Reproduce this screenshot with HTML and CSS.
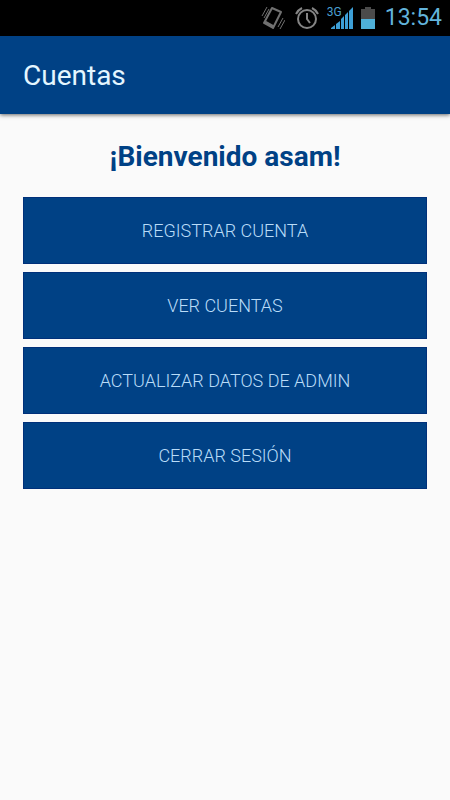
FILE: index.html
```html
<!DOCTYPE html>
<html lang="es">
  <head>
    <meta charset="UTF-8" />
    <meta name="viewport" content="width=device-width, initial-scale=1.0" />
    <title>Cuentas</title>
    <link rel="stylesheet" href="styles.css">
  </head>
  <body>
    <div class="statusBar">
      <!-- Vibrate -->
      <svg width="24" height="26" viewBox="0 0 24 26" fill="none" stroke="#707070">
        <path d="M11 3L20 7L12 23L3 18Z" stroke-width="2" stroke-linejoin="round" />
        <path d="M4 17L13 22" stroke-width="3" />
        <path d="M1 11L6 2M3 13L8 4M17 22L22 13M19 24L24 15" />
      </svg>
      <!-- Alarm -->
      <svg class="alarmIcon" width="24" height="24" viewBox="0 0 24 24" fill="none" stroke="#858585">
        <circle cx="12" cy="13" r="9" stroke-width="2" />
        <path d="M12 7V13L15 17" stroke-width="2" />
        <path d="M1 8Q3 4 7 2M23 8Q21 4 17 2" stroke-width="2" />
      </svg>
      <!-- Signal -->
      <div class="signal">
        <svg width="22" height="22" viewBox="0 0 22 22" fill="#3d9fd6">
          <path d="M0 22V21L4 18V22ZM5 22V17L9 14V22ZM10 22V12L13 9V22ZM14 22V8L17 5V22ZM18 22V4L22 0V22Z" />
        </svg>
        <span class="network">3G</span>
      </div>
      <!-- Battery -->
      <svg class="batteryIcon" width="14" height="22" viewBox="0 0 14 22">
        <path d="M4 0H10V2H14V12H0V2H4Z" fill="#4b4b4b" />
        <path d="M0 12H14V22H0Z" fill="#4fb0d8" />
      </svg>
      <span class="clock">13:54</span>
    </div>

    <header class="appBar">
      <h1>Cuentas</h1>
    </header>

    <main class="container">
      <h2>¡Bienvenido asam!</h2>
      <div class="menu">
        <button type="button">REGISTRAR CUENTA</button>
        <button type="button">VER CUENTAS</button>
        <button type="button">ACTUALIZAR DATOS DE ADMIN</button>
        <button type="button">CERRAR SESIÓN</button>
      </div>
    </main>
  </body>
</html>
```
FILE: styles.css
```css
body {
  font-family: Roboto, "Liberation Sans", sans-serif;
  background-color: #fafafa;
  margin: 0;
}

.statusBar {
  display: flex;
  align-items: center;
  justify-content: flex-end;
  height: 36px;
  padding-right: 8px;
  background-color: #000000;
}

.alarmIcon {
  margin-left: 10px;
}

.signal {
  position: relative;
  display: flex;
  margin-left: 12px;
}

.network {
  position: absolute;
  top: -1px;
  left: -4px;
  font-size: 12px;
  line-height: 12px;
  color: #4a9fd0;
}

.batteryIcon {
  margin-left: 8px;
}

.clock {
  margin-left: 10px;
  font-size: 23px;
  line-height: 36px;
  color: #62b4dc;
}

.appBar {
  display: flex;
  align-items: center;
  height: 78px;
  padding: 0 23px;
  background-color: #004185;
  box-shadow: 0 1px 4px rgba(0, 0, 0, 0.6);
}

h1 {
  margin: 0;
  font-size: 28px;
  font-weight: 400;
  color: #e4f6ff;
}

.container {
  padding: 27px 23px;
}

h2 {
  margin: 0 0 24px;
  font-size: 28px;
  font-weight: 700;
  line-height: 32px;
  text-align: center;
  color: #004185;
}

.menu {
  display: flex;
  flex-direction: column;
  gap: 8px;
}

button {
  height: 67px;
  padding: 0 16px;
  border: 1px solid #00307a;
  background-color: #004185;
  color: #b9dcf8;
  font-family: inherit;
  font-size: 18px;
  font-weight: 300;
  cursor: pointer;
}
```
